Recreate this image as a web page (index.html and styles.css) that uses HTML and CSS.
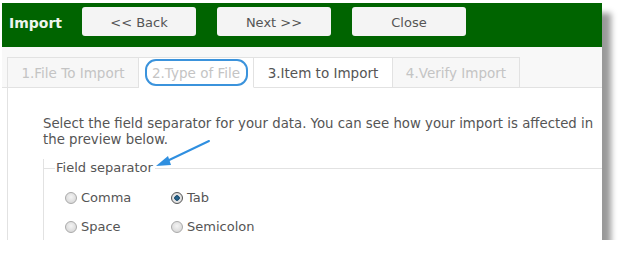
FILE: index.html
```html
<!DOCTYPE html>
<html>
<head>
<meta charset="utf-8">
<link rel="stylesheet" href="styles.css">
</head>
<body>
<div class="window">
  <div class="header">
    <div class="title">Import</div>
    <div class="btn">&lt;&lt; Back</div>
    <div class="btn">Next &gt;&gt;</div>
    <div class="btn">Close</div>
  </div>
  <div class="tabbar">
    <div class="tab t1">1.File To Import</div>
    <div class="tab t2"><span class="hl">2.Type of File</span></div>
    <div class="tab t3">3.Item to Import</div>
    <div class="tab t4">4.Verify Import</div>
  </div>
  <div class="panel">
    <p class="intro">Select the field separator for your data. You can see how your import is affected in the preview below.</p>
    <div class="fieldset">
      <div class="legend">Field separator</div>
      <div class="opts">
        <label class="opt"><span class="radio"></span>Comma</label>
        <label class="opt"><span class="radio on"></span>Tab</label>
        <label class="opt"><span class="radio"></span>Space</label>
        <label class="opt"><span class="radio"></span>Semicolon</label>
      </div>
    </div>
    <svg class="arrow" width="60" height="30" viewBox="0 0 60 30">
      <line x1="56" y1="2" x2="12" y2="23" stroke="#2f8fe0" stroke-width="2" stroke-linecap="round"/>
      <polygon points="3,27 15,17 18,26" fill="#2f8fe0"/>
    </svg>
  </div>
</div>
</body>
</html>
```

FILE: styles.css
```css
* { box-sizing: border-box; }
html, body { margin: 0; padding: 0; background: #fff; }
body { font-family: "DejaVu Sans", Verdana, sans-serif; }

.window {
  margin: 3px 0 0 2px;
  width: 600px;
  height: 237px;
  background: #fff;
  overflow: hidden;
  box-shadow: 9px 10px 6px rgba(0,0,0,0.4);
  display: flex;
  flex-direction: column;
}

.header {
  height: 44px;
  flex: none;
  background: #006400;
  display: flex;
  align-items: flex-start;
  padding: 4px 0 0 7px;
}
.title {
  width: 73px;
  color: #eef5ee;
  font-weight: bold;
  font-size: 14px;
  line-height: 32px;
}
.btn {
  width: 114px;
  height: 29px;
  margin-right: 21px;
  background: #f4f4f4;
  border-radius: 3px;
  color: #555;
  font-size: 13px;
  text-align: center;
  line-height: 31px;
}

.tabbar {
  flex: none;
  height: 41px;
  background: #f8f8f8;
  display: flex;
  align-items: flex-end;
  padding-left: 5px;
  border-bottom: 1px solid #e2e2e2;
}
.tab {
  height: 31px;
  margin-bottom: -1px;
  border: 1px solid #e2e2e2;
  border-left: none;
  color: #c4c4c4;
  font-size: 13.5px;
  line-height: 30px;
  text-align: center;
  background: #f7f7f7;
  white-space: nowrap;
}
.t1 { width: 132px; border-left: 1px solid #e2e2e2; }
.t2 { width: 115px; background: #fff; border-bottom-color: #fff; display: flex; align-items: center; justify-content: center; }
.t3 { width: 139px; background: #fff; color: #555; }
.t4 { width: 127px; }
.hl {
  display: block;
  width: 103px;
  height: 27px;
  border: 2px solid #3b93dc;
  border-radius: 11px;
  line-height: 24px;
  color: #c4c4c4;
}

.panel {
  flex: 1;
  margin-left: 5px;
  border-left: 1px solid #e2e2e2;
  padding: 28px 0 0 35px;
  position: relative;
  color: #555;
}
.intro {
  margin: 0;
  font-size: 13.3px;
  line-height: 16px;
  width: 562px;
}
.fieldset {
  margin-top: 11px;
  border-left: 1px solid #e2e2e2;
  height: 100px;
  position: relative;
}
.legend {
  display: flex;
  align-items: center;
  font-size: 13px;
  line-height: 18px;
  height: 18px;
}
.legend::before {
  content: "";
  width: 11px;
  height: 1px;
  background: #e2e2e2;
  margin-right: 1px;
}
.legend::after {
  content: "";
  flex: 1;
  height: 1px;
  background: #e2e2e2;
  margin-left: 2px;
}
.opts {
  display: grid;
  grid-template-columns: 106px 120px;
  row-gap: 11px;
  padding: 12px 0 0 21px;
}
.opt {
  display: flex;
  align-items: center;
  font-size: 13px;
  line-height: 18px;
}
.radio {
  width: 12px;
  height: 12px;
  border-radius: 50%;
  border: 1px solid #aaa;
  background: radial-gradient(circle at 50% 40%, #f4f4f4, #d0d0d0);
  margin-right: 4px;
}
.radio.on {
  border-color: #555;
  background: radial-gradient(circle at 50% 50%, #2a6f9a 0, #1d4e70 2.5px, #e8e8e8 3px, #cfcfcf 100%);
}

.arrow {
  position: absolute;
  left: 145px;
  top: 51px;
}
```
